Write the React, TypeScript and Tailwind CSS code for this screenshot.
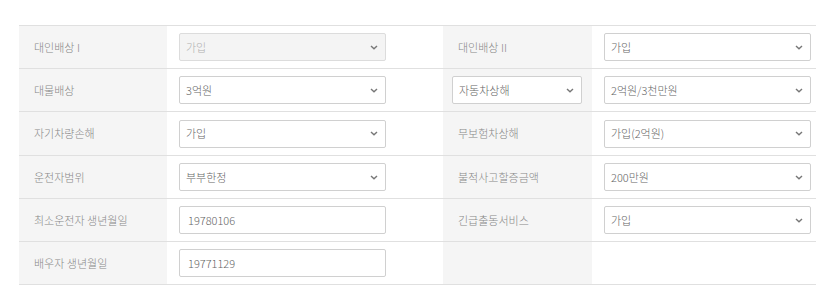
import React from "react";

const font = { fontFamily: '"Noto Sans CJK KR", "Noto Sans", sans-serif' };

function Chevron() {
  return (
    <svg width="8" height="5" viewBox="0 0 8 5" className="shrink-0">
      <path d="M1 1 L4 3.8 L7 1" fill="none" stroke="#777" strokeWidth="1.4" />
    </svg>
  );
}

function Select({ value, disabled, w = "w-[207px]" }: { value: string; disabled?: boolean; w?: string }) {
  return (
    <div
      className={`${w} h-[28px] flex items-center justify-between pl-[6px] pr-[7px] border rounded-[2px] ${
        disabled ? "bg-[#f4f4f4] border-[#dcdcdc] text-[#b0b0b0]" : "bg-white border-[#d0d0d0] text-[#666]"
      } text-[11px] font-light`}
    >
      <span>{value}</span>
      <Chevron />
    </div>
  );
}

function Input({ value }: { value: string }) {
  return (
    <div className="w-[207px] h-[28px] flex items-center pl-[8px] border border-[#d0d0d0] rounded-[2px] bg-white text-[11px] font-light text-[#666]">
      {value}
    </div>
  );
}

function Label({ children }: { children?: React.ReactNode }) {
  return (
    <div className="bg-[#f5f5f5] flex items-center pl-[15px] text-[11px] font-light text-[#888]">{children}</div>
  );
}

function Val({ children }: { children?: React.ReactNode }) {
  return <div className="flex items-center pl-[12px]">{children}</div>;
}

function Row({ children, h = "h-[43px]" }: { children: React.ReactNode; h?: string }) {
  return (
    <div className={`grid grid-cols-[148px_276px_149px_224px] ${h} border-b border-[#e0e0e0]`}>{children}</div>
  );
}

export default function App() {
  return (
    <div className="w-[827px] h-[301px] bg-white" style={font}>
      <div className="pt-[25px] pl-[19px]">
        <div className="w-[797px] border-t border-[#e0e0e0]">
          <Row>
            <Label>대인배상 I</Label>
            <Val>
              <Select value="가입" disabled />
            </Val>
            <Label>대인배상 II</Label>
            <Val>
              <Select value="가입" />
            </Val>
          </Row>
          <Row>
            <Label>대물배상</Label>
            <Val>
              <Select value="3억원" />
            </Val>
            <div className="bg-[#f5f5f5] flex items-center pl-[9px]">
              <Select value="자동차상해" w="w-[130px]" />
            </div>
            <Val>
              <Select value="2억원/3천만원" />
            </Val>
          </Row>
          <Row h="h-[44px]">
            <Label>자기차량손해</Label>
            <Val>
              <Select value="가입" />
            </Val>
            <Label>무보험차상해</Label>
            <Val>
              <Select value="가입(2억원)" />
            </Val>
          </Row>
          <Row>
            <Label>운전자범위</Label>
            <Val>
              <Select value="부부한정" />
            </Val>
            <Label>불적사고할증금액</Label>
            <Val>
              <Select value="200만원" />
            </Val>
          </Row>
          <Row>
            <Label>최소운전자 생년월일</Label>
            <Val>
              <Input value="19780106" />
            </Val>
            <Label>긴급출동서비스</Label>
            <Val>
              <Select value="가입" />
            </Val>
          </Row>
          <Row>
            <Label>배우자 생년월일</Label>
            <Val>
              <Input value="19771129" />
            </Val>
            <Label />
            <Val />
          </Row>
        </div>
      </div>
    </div>
  );
}
